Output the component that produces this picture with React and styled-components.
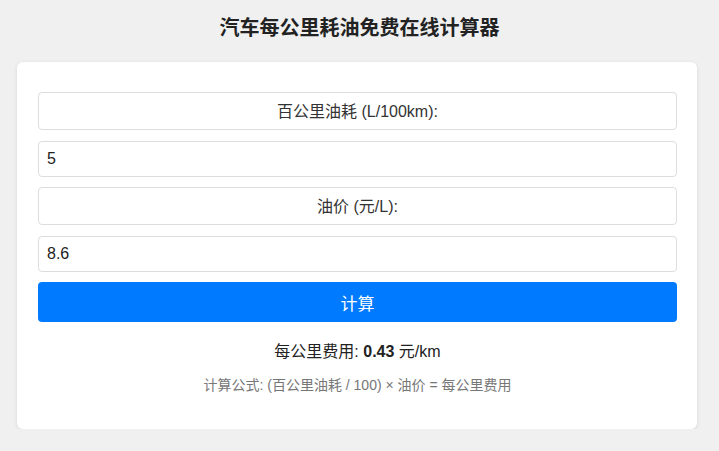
import React, { useState } from "react";
import styled, { createGlobalStyle } from "styled-components";

const GlobalStyle = createGlobalStyle`
  body {
    margin: 0;
    background: #f0f0f0;
    font-family: "Liberation Sans", Arial, "Noto Sans CJK SC", sans-serif;
    color: #333;
  }
`;

const Title = styled.h1`
  font-size: 20px;
  font-weight: bold;
  color: #222;
  text-align: center;
  margin: 0;
  padding: 17px 0 23px;
  line-height: 22px;
`;

const Card = styled.div`
  width: 680px;
  margin-left: 17px;
  box-sizing: border-box;
  background: #fff;
  border-radius: 6px;
  box-shadow: 0 1px 4px rgba(0, 0, 0, 0.1);
  padding: 30px 20px 35px 21px;
  display: flex;
  flex-direction: column;
  gap: 10.5px;
`;

const Label = styled.label`
  display: block;
  height: 38px;
  line-height: 38px;
  border: 1px solid #ddd;
  border-radius: 4px;
  text-align: center;
  font-size: 16px;
  color: #333;
  box-sizing: border-box;
`;

const Input = styled.input`
  height: 36px;
  box-sizing: border-box;
  border: 1px solid #ddd;
  border-radius: 4px;
  padding: 0 8px;
  font-size: 16px;
  font-family: inherit;
  color: #222;
  outline: none;
`;

const Button = styled.button`
  height: 40px;
  border: 0;
  border-radius: 4px;
  background: #007bff;
  color: #fff;
  font-size: 17px;
  font-family: inherit;
  cursor: pointer;
`;

const Result = styled.div`
  text-align: center;
  font-size: 16px;
  color: #222;
  margin-top: 5px;
  b {
    font-weight: bold;
  }
`;

const Formula = styled.div`
  text-align: center;
  font-size: 14px;
  color: #777;
  margin-top: 1.5px;
`;

export default function App() {
  const [rate, setRate] = useState("5");
  const [price, setPrice] = useState("8.6");
  const [cost, setCost] = useState(((5 / 100) * 8.6).toFixed(2));

  const calc = () => {
    const v = (parseFloat(rate) / 100) * parseFloat(price);
    setCost(isNaN(v) ? "0.00" : v.toFixed(2));
  };

  return (
    <>
      <GlobalStyle />
      <Title>汽车每公里耗油免费在线计算器</Title>
      <Card>
        <Label>百公里油耗 (L/100km):</Label>
        <Input value={rate} onChange={(e) => setRate(e.target.value)} />
        <Label>油价 (元/L):</Label>
        <Input value={price} onChange={(e) => setPrice(e.target.value)} />
        <Button onClick={calc}>计算</Button>
        <Result>
          每公里费用: <b>{cost}</b> 元/km
        </Result>
        <Formula>计算公式: (百公里油耗 / 100) × 油价 = 每公里费用</Formula>
      </Card>
    </>
  );
}
